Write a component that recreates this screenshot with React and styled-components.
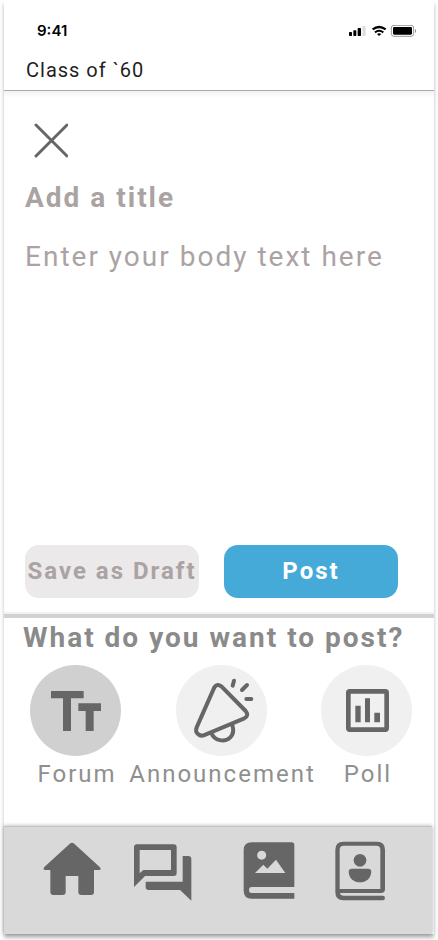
import React, { useState } from "react";
import styled, { createGlobalStyle } from "styled-components";

const ink = "#666666";

const GlobalStyle = createGlobalStyle`
  *, *::before, *::after { box-sizing: border-box; }
  body {
    margin: 0;
    background: #ffffff;
    font-family: Roboto, "Liberation Sans", sans-serif;
  }
  button, input, textarea { font: inherit; letter-spacing: inherit; }
`;

const Page = styled.div`
  min-height: 100vh;
  padding: 0 4px 6px;
  display: flex;
`;

const Screen = styled.div`
  flex: 1;
  min-width: 0;
  display: flex;
  flex-direction: column;
  background: #ffffff;
  box-shadow: 0 4px 4px rgba(0, 0, 0, 0.25);
`;

const Header = styled.header`
  border-bottom: 1px solid #b3a5a5;
  box-shadow: 0 4px 4px rgba(0, 0, 0, 0.05);
`;

const StatusBar = styled.div`
  display: flex;
  align-items: center;
  justify-content: space-between;
  padding: 22px 18px 0 33px;
  color: #000000;
`;

const Clock = styled.time`
  font: 600 15px/18px Inter, sans-serif;
`;

const StatusIcons = styled.svg`
  display: block;
  width: 67px;
  height: 12px;
`;

const ClassName = styled.h1`
  margin: 0;
  padding: 18px 22px 8px;
  font-size: 20px;
  line-height: 24px;
  font-weight: 400;
  letter-spacing: 1px;
  color: #1f1f1f;
`;

const Composer = styled.form`
  flex: 1;
  display: flex;
  flex-direction: column;
  padding: 32px 36px 16px 21px;
  border-bottom: 4px solid #d1d1d1;
  box-shadow: inset 0 -2px 2px rgba(0, 0, 0, 0.06);
`;

const CloseButton = styled.button`
  width: 36px;
  height: 36px;
  margin-left: 7px;
  padding: 0;
  border: 0;
  background: none;
  cursor: pointer;

  svg { display: block; width: 100%; height: 100%; }
`;

const TitleField = styled.input`
  width: 100%;
  height: 36px;
  margin-top: 20px;
  padding: 0;
  border: 0;
  outline: 0;
  background: none;
  font-size: 28px;
  font-weight: 700;
  letter-spacing: 2px;
  color: ${ink};

  &::placeholder { color: #aba3a3; opacity: 1; }
`;

const BodyField = styled.textarea`
  flex: 1;
  width: 100%;
  min-height: 120px;
  margin: 24px 0;
  padding: 0;
  border: 0;
  outline: 0;
  resize: none;
  background: none;
  font-size: 28px;
  line-height: 36px;
  letter-spacing: 2px;
  color: ${ink};

  &::placeholder { color: #aba3a3; opacity: 1; }
`;

const Actions = styled.div`
  display: flex;
  gap: 25px;
`;

const ActionButton = styled.button`
  flex: 1 1 0;
  min-width: 0;
  height: 53px;
  padding: 0 0 2px;
  border: 0;
  border-radius: 14px;
  font-size: 24px;
  font-weight: 700;
  letter-spacing: 2px;
  white-space: nowrap;
  cursor: pointer;
  color: ${(p) => (p.$primary ? "#ffffff" : "#aba3a3")};
  background: ${(p) => (p.$primary ? "#45aad7" : "#ebe9ea")};
`;

const TypePicker = styled.fieldset`
  min-width: 0;
  margin: 0;
  padding: 0 0 37px;
  border: 0;
`;

const PickerTitle = styled.legend`
  padding: 2px 0 0 19px;
  font-size: 28px;
  line-height: 36px;
  font-weight: 700;
  letter-spacing: 2px;
  white-space: nowrap;
  color: #8a8a8a;
`;

const TypeList = styled.div`
  display: flex;
  justify-content: space-between;
  padding: 9px 22px 0 26px;
`;

const TypeOption = styled.label`
  width: 91px;
  display: flex;
  flex-direction: column;
  align-items: center;
  cursor: pointer;
`;

const TypeRadio = styled.input`
  appearance: none;
  width: 0;
  height: 0;
  margin: 0;
`;

const TypeCircle = styled.span`
  width: 91px;
  height: 91px;
  border-radius: 50%;
  background: #f0f0f0;

  ${TypeRadio}:checked + & { background: #d0d0d0; }
  ${TypeRadio}:focus-visible + & { outline: 2px solid #45aad7; }

  svg { display: block; width: 100%; height: 100%; }
`;

const TypeName = styled.span`
  margin-top: 3px;
  padding-left: 3px;
  font-size: 24px;
  line-height: 30px;
  letter-spacing: 2px;
  white-space: nowrap;
  color: #8f8f8f;
`;

const NavBar = styled.nav`
  display: flex;
  justify-content: space-between;
  height: 108px;
  margin-right: 2px;
  padding: 11px 27px 0 22px;
  background: #d9d9d9;
  border-top: 1px solid #c4c4c4;
  box-shadow: 0 0 4px rgba(0, 0, 0, 0.35);
`;

const NavGroup = styled.div`
  display: flex;
`;

const NavLink = styled.a`
  width: 91px;
  height: 64px;
  display: flex;
  justify-content: center;

  svg { display: block; width: 64px; height: 64px; }
`;

const TextIcon = () => (
  <svg viewBox="90 45 273 273" fill={ink} aria-hidden="true">
    <path d="M153 123h98v22h-38v98h-24v-98h-36z" />
    <path d="M235 160h68v23h-22v60h-24v-60h-22z" />
  </svg>
);

const MegaphoneIcon = () => (
  <svg viewBox="48 45 273 273" fill="none" stroke={ink} strokeWidth="12" strokeLinecap="round" strokeLinejoin="round" aria-hidden="true">
    <path d="M163 112L110 232Q105 245 114 252Q121 259 131 256L253 205Q268 197 257 183L185 110Q171 99 163 112Z" />
    <path d="M154 249C163 272 193 279 211 262C222 251 221 238 217 225" />
    <path d="M222 92L218 107M261 105L246 120M259 147H274" />
  </svg>
);

const PollIcon = () => (
  <svg viewBox="93 45 273 273" fill={ink} aria-hidden="true">
    <rect x="175" y="124" width="115" height="115" rx="4" fill="none" stroke={ink} strokeWidth="14" />
    <path d="M196 167h16v50h-16zM225 145h15v72h-15zM253 188h17v29h-17z" />
  </svg>
);

const HomeIcon = () => (
  <svg viewBox="120 84 192 192" fill={ink} aria-hidden="true">
    <path d="M211 100q5-4 10 0l78 71q7 9-2 9h-15v66q0 9-9 9h-29q-9 0-9-9v-48h-38v48q0 9-9 9h-28q-9 0-9-9v-66h-15q-9 0-3-9z" />
  </svg>
);

const ForumIcon = () => (
  <svg viewBox="394 84 192 192" fill={ink} aria-hidden="true">
    <path fillRule="evenodd" d="M412 103h110q9 0 9 9v77q0 9-9 9h-86l-33 33v-119q0-9 9-9zM420 120v70l11-10h83v-60z" />
    <path d="M549 138h17q9 0 9 9v125l-34-32h-94q-9 0-9-9v-16h111z" />
  </svg>
);

const AlbumIcon = () => (
  <svg viewBox="56 84 192 192" fill={ink} aria-hidden="true">
    <path fillRule="evenodd" d="M100 97h120q8 0 8 8v126H100q-8 0-8 9t8 9h128v17H100q-24 0-24-24V121q0-24 24-24zM130 122a13.500 13.500 0 1 0 .1 0zM110 189h91l-28-40-26 27-12-12z" />
  </svg>
);

const ContactIcon = () => (
  <svg viewBox="330 84 192 192" fill={ink} aria-hidden="true">
    <path fillRule="evenodd" d="M376 95h101q24 0 24 24v118q0 12-12 12H366q1 8 12 8h116q7 0 7 7t-7 7H376q-24 0-24-24V119q0-24 24-24zM377 107q-12 0-12 12v118h122V119q0-12-12-12z" />
    <circle cx="426" cy="151" r="19" />
    <path d="M402 176h48q10 0 10 10c-2 20-16 31-34 31s-33-11-34-31q0-10 10-10z" />
  </svg>
);

const postTypes = [
  { id: "forum", name: "Forum", Icon: TextIcon },
  { id: "announcement", name: "Announcement", Icon: MegaphoneIcon },
  { id: "poll", name: "Poll", Icon: PollIcon },
];

const navGroups = [
  [
    { name: "Home", Icon: HomeIcon },
    { name: "Conversations", Icon: ForumIcon },
  ],
  [
    { name: "Album", Icon: AlbumIcon },
    { name: "Contacts", Icon: ContactIcon },
  ],
];

export default function App() {
  const [type, setType] = useState("forum");

  return (
    <>
      <GlobalStyle />
      <Page>
        <Screen>
          <Header>
            <StatusBar>
              <Clock>9:41</Clock>
              <StatusIcons viewBox="390 75 201 36" aria-hidden="true">
                <rect x="390" y="96" width="9" height="12" rx="2" />
                <rect x="403" y="91" width="9" height="17" rx="2" />
                <rect x="416" y="84" width="10" height="24" rx="2" />
                <rect x="430" y="78" width="10" height="30" rx="2" fill="#dddddd" />
                <path d="M461 88Q480 74 500 88" fill="none" stroke="#000" strokeWidth="7" />
                <path d="M468 97Q480 88 493 97" fill="none" stroke="#000" strokeWidth="6" />
                <path d="M474 102Q480 97 487 102L480 108z" />
                <rect x="517" y="76" width="67" height="33" rx="8" fill="none" stroke="#999999" strokeWidth="3" />
                <rect x="522" y="81" width="57" height="23" rx="4" />
                <path d="M588 87q3 1 3 6t-3 6z" fill="#888888" />
              </StatusIcons>
            </StatusBar>
            <ClassName>Class of `60</ClassName>
          </Header>

          <Composer onSubmit={(e) => e.preventDefault()}>
            <CloseButton type="button" aria-label="Close">
              <svg viewBox="0 0 36 36" fill="none" stroke={ink} strokeWidth="3" strokeLinecap="round" aria-hidden="true">
                <path d="M4 2L35 33M35 2L4 33" />
              </svg>
            </CloseButton>
            <TitleField aria-label="Title" placeholder="Add a title" />
            <BodyField aria-label="Body" placeholder="Enter your body text here" />
            <Actions>
              <ActionButton type="button">Save as Draft</ActionButton>
              <ActionButton type="submit" $primary>Post</ActionButton>
            </Actions>
          </Composer>

          <TypePicker>
            <PickerTitle>What do you want to post?</PickerTitle>
            <TypeList>
              {postTypes.map(({ id, name, Icon }) => (
                <TypeOption key={id}>
                  <TypeRadio
                    type="radio"
                    name="post-type"
                    value={id}
                    checked={type === id}
                    onChange={() => setType(id)}
                  />
                  <TypeCircle>
                    <Icon />
                  </TypeCircle>
                  <TypeName>{name}</TypeName>
                </TypeOption>
              ))}
            </TypeList>
          </TypePicker>

          <NavBar aria-label="Main">
            {navGroups.map((group) => (
              <NavGroup key={group[0].name}>
                {group.map(({ name, Icon }) => (
                  <NavLink key={name} href="#" aria-label={name}>
                    <Icon />
                  </NavLink>
                ))}
              </NavGroup>
            ))}
          </NavBar>
        </Screen>
      </Page>
    </>
  );
}
